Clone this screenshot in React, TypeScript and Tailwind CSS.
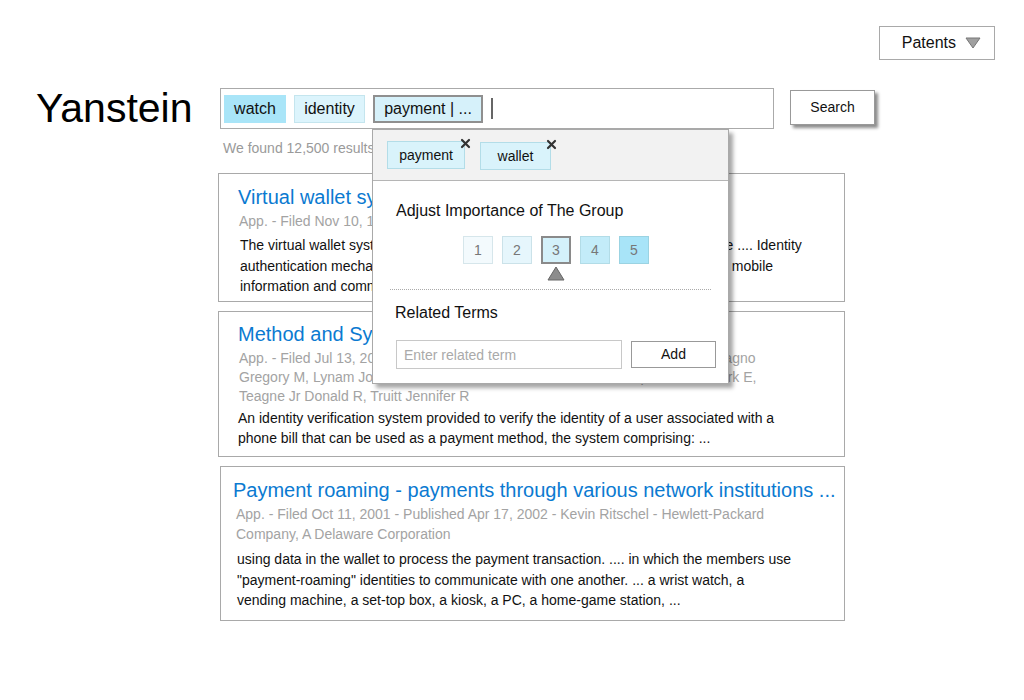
import React from "react";

// Wireframe of a patent search page with the term-group popover open

const chipBase = "h-[28px] flex items-center justify-center text-[16px] text-[#111]";

function CloseMark() {
  return (
    <svg
      className="absolute -top-[4px] -right-[7px]"
      width="11"
      height="11"
      viewBox="0 0 11 11"
    >
      <path d="M2 2 L9 9 M9 2 L2 9" stroke="#333" strokeWidth="2.2" strokeLinecap="round" />
    </svg>
  );
}

const levels = [
  { n: 1, cls: "bg-[#f3fafd] border-[#d6e6eb]" },
  { n: 2, cls: "bg-[#e6f6fc] border-[#cbe2e9]" },
  { n: 3, cls: "bg-[#d4f1fa] border-[#8a8a8a] border-2" },
  { n: 4, cls: "bg-[#c3ecf9] border-[#b2dce7]" },
  { n: 5, cls: "bg-[#a8e4f8] border-[#9bd3e2]" },
];

function GroupPopover() {
  return (
    <div className="absolute left-[372px] top-[129px] w-[357px] h-[255px] bg-white border border-[#a9a9a9] shadow-[4px_4px_4px_rgba(0,0,0,0.35)]">
      <div className="h-[51px] bg-[#f2f2f2] border-b border-[#b5b5b5] flex items-start pl-[14px] pt-[11px] gap-[15px]">
        <div className="relative w-[78px] h-[28px] bg-[#d9f3fb] border border-[#b3dde8] flex items-center justify-center text-[14px] text-[#111]">
          payment
          <CloseMark />
        </div>
        <div className="relative w-[71px] h-[28px] mt-[1px] bg-[#d9f3fb] border border-[#b3dde8] flex items-center justify-center text-[14px] text-[#111]">
          wallet
          <CloseMark />
        </div>
      </div>

      <div className="pl-[23px] pt-[21px] text-[16px] leading-[18px] text-[#111]">
        Adjust Importance of The Group
      </div>

      <div className="flex gap-[9px] mt-[16px] pl-[90px]">
        {levels.map((l) => (
          <div key={l.n} className="flex flex-col items-center">
            <div
              className={`w-[30px] h-[28px] border flex items-center justify-center text-[14px] text-[#777] ${l.cls}`}
            >
              {l.n}
            </div>
            {l.n === 3 ? (
              <svg width="18" height="15" viewBox="0 0 18 15" className="mt-[2px]">
                <path d="M9 1 L17 14 L1 14 Z" fill="#8c8c8c" stroke="#666" strokeWidth="1" />
              </svg>
            ) : (
              <div className="h-[17px]" />
            )}
          </div>
        ))}
      </div>

      <div className="mx-[17px] mt-[8px] border-t border-dotted border-[#aaa]" />

      <div className="pl-[22px] pt-[14px] text-[16px] leading-[18px] text-[#111]">Related Terms</div>

      <div className="flex items-center pl-[23px] mt-[18px] gap-[9px]">
        <input
          className="w-[226px] h-[29px] border border-[#c8c8c8] px-[7px] text-[14px] text-[#333] placeholder:text-[#aaa] outline-none"
          placeholder="Enter related term"
        />
        <button className="w-[85px] h-[27px] border border-[#999] bg-white text-[14px] text-[#111]">
          Add
        </button>
      </div>
    </div>
  );
}

type CardProps = {
  wrap: string;
  title: string;
  titleCls: string;
  meta: React.ReactNode;
  metaCls: string;
  body: React.ReactNode;
  bodyCls: string;
};

function ResultCard({ wrap, title, titleCls, meta, metaCls, body, bodyCls }: CardProps) {
  return (
    <div className={`border border-[#a9a9a9] bg-white overflow-hidden ${wrap}`}>
      <div className={`text-[20px] leading-[24px] text-[#0b7ad1] whitespace-nowrap ${titleCls}`}>{title}</div>
      <div className={`text-[14px] text-[#a3a3a3] whitespace-nowrap ${metaCls}`}>{meta}</div>
      <div className={`text-[14px] text-[#111] whitespace-nowrap ${bodyCls}`}>{body}</div>
    </div>
  );
}

export default function App() {
  return (
    <div
      className="relative w-[1024px] h-[700px] bg-white overflow-hidden"
      style={{ fontFamily: '"Liberation Sans", Arial, sans-serif' }}
    >
      {/* top right selector */}
      <div className="flex justify-end pt-[26px] pr-[29px]">
        <button className="w-[116px] h-[34px] border border-[#a9a9a9] bg-white flex items-center justify-end pr-[13px] gap-[9px] text-[16px] text-[#111]">
          Patents
          <svg width="16" height="12" viewBox="0 0 16 12">
            <path d="M1 1 L15 1 L8 11 Z" fill="#a0a0a0" stroke="#777" strokeWidth="1" />
          </svg>
        </button>
      </div>

      {/* logo + search */}
      <div className="flex items-start mt-[28px]">
        <div className="w-[220px] pl-[36px] h-[40px] text-[41px] leading-[40px] text-black">Yanstein</div>
        <div className="w-[554px] h-[41px] border border-[#aaa] flex items-center pl-[3px] gap-[8px]">
          <div className={`${chipBase} w-[62px] bg-[#a9e5f8]`}>watch</div>
          <div className={`${chipBase} w-[71px] bg-[#dcf4fc] border border-[#c4e5ee]`}>identity</div>
          <div className={`${chipBase} w-[110px] bg-[#d6f1fa] border-2 border-[#8f8f8f]`}>payment | ...</div>
          <div className="w-[2px] h-[21px] bg-[#666]" />
        </div>
        <button className="ml-[16px] mt-[2px] w-[85px] h-[35px] border border-[#999] bg-white text-[14px] text-[#111] shadow-[3px_3px_3px_rgba(0,0,0,0.45)]">
          Search
        </button>
      </div>

      <div className="ml-[223px] mt-[11px] text-[14px] leading-[17px] text-[#9a9a9a]">We found 12,500 results</div>

      {/* results */}
      <div className="ml-[218px] mt-[16px] w-[627px] flex flex-col gap-[9px]">
        <ResultCard
          wrap="h-[129px] pl-[19px]"
          title="Virtual wallet system and method"
          titleCls="pt-[11px]"
          meta="App. - Filed Nov 10, 1999 - Published Mar 14, 2002 - John Smith"
          metaCls="mt-[2px] leading-[20px] pl-[1px]"
          body={
            <>
              The virtual wallet system stores the payment credentials of the user on a device .... Identity
              <br />
              authentication mechanisms verify the users prior to every payment made using mobile
              <br />
              information and communication device.
            </>
          }
          bodyCls="mt-[4px] leading-[20.5px] pl-[2px]"
        />
        <ResultCard
          wrap="h-[146px] pl-[19px]"
          title="Method and System for Verifying Identity"
          titleCls="pt-[10px]"
          meta={
            <>
              App. - Filed Jul 13, 2000 - Published Jan 17, 2002 - Bishop F, Bowen Scott, Teagno
              <br />
              Gregory M, Lynam John P, Maxwell Robert S, Norton Scott A, Pepe, Rovira Mark E,
              <br />
              Teagne Jr Donald R, Truitt Jennifer R
            </>
          }
          metaCls="mt-[3px] leading-[19px] pl-[1px]"
          body={
            <>
              An identity verification system provided to verify the identity of a user associated with a
              <br />
              phone bill that can be used as a payment method, the system comprising: ...
            </>
          }
          bodyCls="mt-[3px] leading-[19.5px]"
        />
        <ResultCard
          wrap="h-[155px] ml-[2px] pl-[12px]"
          title="Payment roaming - payments through various network institutions ..."
          titleCls="pt-[11px]"
          meta={
            <>
              App. - Filed Oct 11, 2001 - Published Apr 17, 2002 - Kevin Ritschel - Hewlett-Packard
              <br />
              Company, A Delaware Corporation
            </>
          }
          metaCls="mt-[3px] leading-[19.5px] pl-[3px]"
          body={
            <>
              using data in the wallet to process the payment transaction. .... in which the members use
              <br />
              "payment-roaming" identities to communicate with one another. ... a wrist watch, a
              <br />
              vending machine, a set-top box, a kiosk, a PC, a home-game station, ...
            </>
          }
          bodyCls="mt-[5px] leading-[20.5px] pl-[4px]"
        />
      </div>

      <GroupPopover />
    </div>
  );
}
